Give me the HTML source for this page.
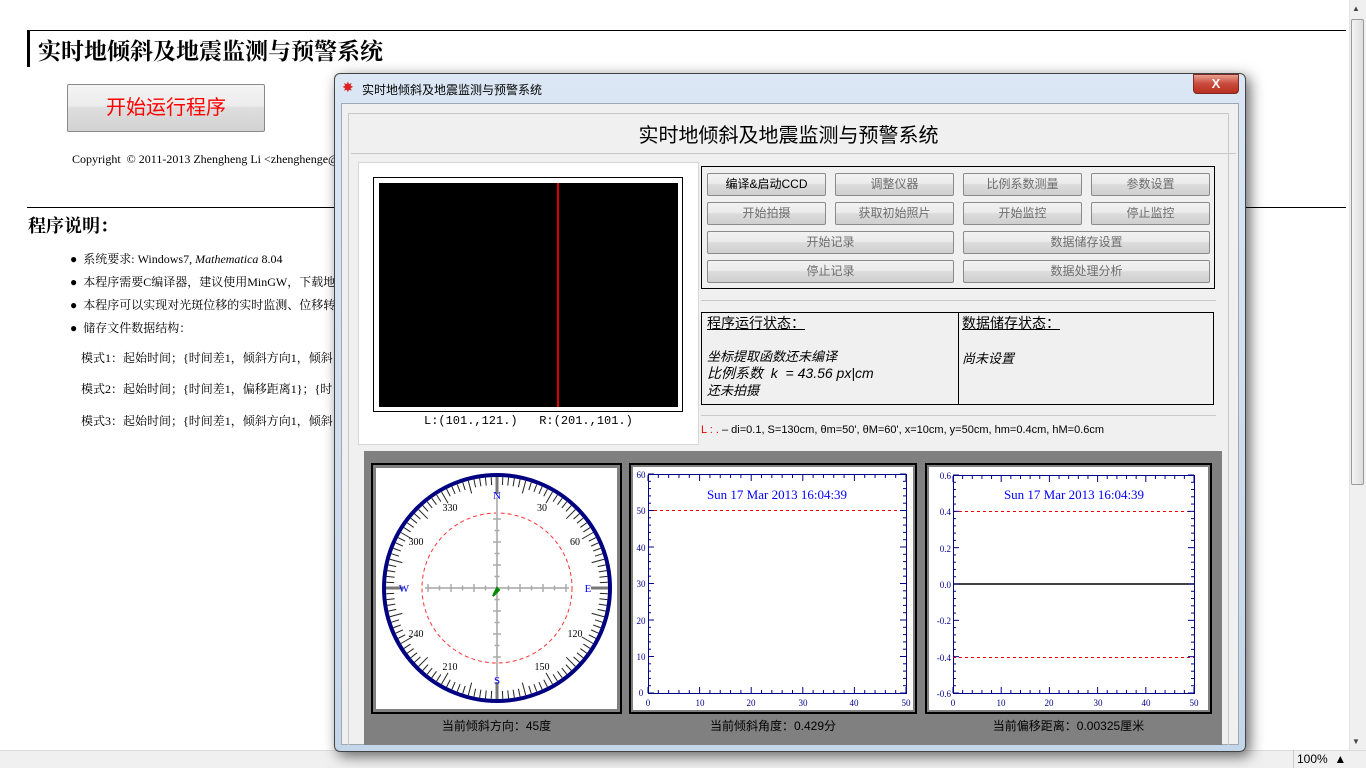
<!DOCTYPE html>
<html><head><meta charset="utf-8">
<style>
*{margin:0;padding:0;box-sizing:border-box}
body{width:1366px;height:768px;overflow:hidden;background:#fff;position:relative;font-family:"Liberation Serif","Noto Serif CJK SC","Noto Sans CJK SC",serif;color:#000}
.a{position:absolute}
.cj{font-family:"Liberation Sans","Noto Sans CJK SC",sans-serif}
.btn{position:absolute;height:23px;border:1px solid #8a8a8a;border-radius:2px;background:linear-gradient(#f2f2f2 0,#ebebeb 45%,#dcdcdc 50%,#cfcfcf 100%);font:12px "Liberation Sans","Noto Sans CJK SC",sans-serif;color:#6d6d6d;text-align:center;line-height:21px}
.ln{position:absolute;height:1px;background:#c8c8c8}
</style></head><body>
<div class="a" style="left:27px;top:30px;width:1319px;height:1px;background:#000"></div>
<div class="a" style="left:27px;top:30px;width:3px;height:37px;background:#000"></div>
<div class="a" style="left:38px;top:36px;font-size:23px;font-weight:bold;line-height:32px">实时地倾斜及地震监测与预警系统</div>
<div class="a" style="left:67px;top:84px;width:198px;height:48px;border:1px solid #8a8a8a;border-radius:2px;background:linear-gradient(#f4f4f4 0,#ececec 45%,#dedede 50%,#d2d2d2 100%);color:#f00;font:20px 'Liberation Sans','Noto Sans CJK SC',sans-serif;text-align:center;line-height:46px">开始运行程序</div>
<div class="a" style="left:72px;top:152px;font-size:12px">Copyright &nbsp;© 2011-2013 Zhengheng Li &lt;zhenghenge@</div>
<div class="a" style="left:27px;top:207px;width:1319px;height:1px;background:#000"></div>
<div class="a" style="left:28px;top:212px;font-size:18px;font-weight:bold">程序说明：</div>
<div class="a" style="left:70px;top:248px;font-size:12px;line-height:23px">
<div>●&nbsp; 系统要求: Windows7, <i>Mathematica</i> 8.04</div>
<div>●&nbsp; 本程序需要C编译器，建议使用MinGW，下载地</div>
<div>●&nbsp; 本程序可以实现对光斑位移的实时监测、位移转</div>
<div>●&nbsp; 储存文件数据结构：</div></div>
<div class="a" style="left:81px;top:349px;font-size:12px">模式1：起始时间；{时间差1，倾斜方向1，倾斜</div>
<div class="a" style="left:81px;top:380px;font-size:12px">模式2：起始时间；{时间差1，偏移距离1}；{时</div>
<div class="a" style="left:81px;top:412px;font-size:12px">模式3：起始时间；{时间差1，倾斜方向1，倾斜</div>
<div class="a" style="left:1349px;top:0;width:17px;height:750px;background:#f0f0f0;border-left:1px solid #e3e3e3"></div>
<div class="a" style="left:1351px;top:19px;width:13px;height:466px;border:1px solid #9a9a9a;border-radius:2px;background:linear-gradient(90deg,#f4f4f4,#dcdcdc)"></div>
<div class="a" style="left:1352px;top:4px;font-size:8px;color:#444">▲</div>
<div class="a" style="left:1352px;top:737px;font-size:8px;color:#444">▼</div>
<div class="a" style="left:0;top:750px;width:1366px;height:18px;background:#f0f0f0;border-top:1px solid #dcdcdc"></div>
<div class="a" style="left:1293px;top:750px;width:1px;height:18px;background:#ccc"></div>
<div class="a cj" style="left:1297px;top:752px;font-size:12px">100% &nbsp;▲</div>
<div class="a" style="left:334px;top:73px;width:912px;height:679px;border:1px solid #444;border-radius:6px;background:linear-gradient(#dbe7f4,#c4d6ea);box-shadow:4px 4px 14px rgba(0,0,0,.6)"></div>
<div class="a" style="left:342px;top:80px;color:#d22;font-size:14px">✸</div>
<div class="a cj" style="left:362px;top:81px;font-size:12px">实时地倾斜及地震监测与预警系统</div>
<div class="a" style="left:1193px;top:74px;width:46px;height:20px;border:1px solid #7a2a20;border-radius:0 0 4px 4px;background:linear-gradient(#e8a090,#c8483a 50%,#b83020);color:#fff;font:bold 13px 'Liberation Sans',sans-serif;text-align:center;line-height:18px">X</div>
<div class="a" style="left:341px;top:103px;width:898px;height:642px;background:#f0f0f0;border:1px solid #a0a8b4"></div>
<div class="a" style="left:348px;top:113px;width:881px;height:632px;border:1px solid #c8c8c8;border-bottom:none"></div>
<div class="a cj" style="left:348px;top:119px;width:881px;text-align:center;font-size:20px">实时地倾斜及地震监测与预警系统</div>
<div class="ln" style="left:351px;top:153px;width:885px"></div>
<div class="a" style="left:358px;top:162px;width:341px;height:283px;background:#fff;border:1px solid #d8d8d8"></div>
<div class="a" style="left:373px;top:177px;width:310px;height:235px;border:1px solid #000"></div>
<div class="a" style="left:379px;top:183px;width:299px;height:224px;background:#000"></div>
<div class="a" style="left:557px;top:183px;width:2px;height:224px;background:#d00"></div>
<div class="a" style="left:424px;top:414px;font:12px 'Liberation Mono','Noto Sans CJK SC',monospace">L:(101.,121.)&nbsp;&nbsp;&nbsp;R:(201.,101.)</div>
<div class="a" style="left:701px;top:166px;width:514px;height:123px;border:1px solid #000"></div>
<div class="btn" style="left:707px;top:173px;width:119px;color:#000">编译&amp;启动CCD</div>
<div class="btn" style="left:835px;top:173px;width:119px">调整仪器</div>
<div class="btn" style="left:963px;top:173px;width:119px">比例系数测量</div>
<div class="btn" style="left:1091px;top:173px;width:119px">参数设置</div>
<div class="btn" style="left:707px;top:202px;width:119px">开始拍摄</div>
<div class="btn" style="left:835px;top:202px;width:119px">获取初始照片</div>
<div class="btn" style="left:963px;top:202px;width:119px">开始监控</div>
<div class="btn" style="left:1091px;top:202px;width:119px">停止监控</div>
<div class="btn" style="left:707px;top:231px;width:247px">开始记录</div>
<div class="btn" style="left:963px;top:231px;width:247px">数据储存设置</div>
<div class="btn" style="left:707px;top:260px;width:247px">停止记录</div>
<div class="btn" style="left:963px;top:260px;width:247px">数据处理分析</div>
<div class="ln" style="left:701px;top:300px;width:515px"></div>
<div class="a" style="left:701px;top:312px;width:513px;height:93px;border:1px solid #000"></div>
<div class="a" style="left:958px;top:312px;width:1px;height:93px;background:#000"></div>
<div class="a cj" style="left:707px;top:313px;font-size:14px;text-decoration:underline">程序运行状态：</div>
<div class="a cj" style="left:962px;top:313px;font-size:14px;text-decoration:underline">数据储存状态：</div>
<div class="a cj" style="left:707px;top:348px;font-size:13px;font-style:italic;line-height:17px">坐标提取函数还未编译<br><span style="font-size:14px">比例系数 &nbsp;k&nbsp; = 43.56 px|cm</span><br>还未拍摄</div>
<div class="a cj" style="left:962px;top:348px;font-size:13px;font-style:italic">尚未设置</div>
<div class="ln" style="left:701px;top:415px;width:515px"></div>
<div class="a cj" style="left:701px;top:424px;font-size:11px"><span style="color:#e00">L : .</span> – di=0.1, S=130cm, θm=50', θM=60', x=10cm, y=50cm, hm=0.4cm, hM=0.6cm</div>
<div class="a" style="left:364px;top:451px;width:858px;height:294px;background:#808080"></div>
<div class="a" style="left:371px;top:463px;width:251px;height:251px;border:2px solid #000;background:#fff;box-shadow:inset 0 0 0 3px #808080"></div>
<div class="a" style="left:629px;top:463px;width:288px;height:251px;border:2px solid #000;background:#fff;box-shadow:inset 0 0 0 2px #808080"></div>
<div class="a" style="left:925px;top:463px;width:287px;height:251px;border:2px solid #000;background:#fff;box-shadow:inset 0 0 0 2px #808080"></div>
<svg class="a" style="left:0;top:0" width="1366" height="768">
<g font-family="Liberation Serif,serif" font-size="10">
<circle cx="497" cy="588" r="75" fill="none" stroke="#f33" stroke-dasharray="4,3"/>
<line x1="425" y1="588" x2="569" y2="588" stroke="#bbb" stroke-width="2"/>
<line x1="497" y1="497" x2="497" y2="680" stroke="#bbb" stroke-width="2"/>
<g id="tk"></g>
<circle cx="497" cy="588" r="113" fill="none" stroke="#000080" stroke-width="4"/>
<g fill="#00f" text-anchor="middle" font-size="11"><text x="497" y="499">N</text><text x="497" y="684">S</text><text x="404" y="592">W</text><text x="588" y="592">E</text></g>
<g fill="#000" text-anchor="middle" font-size="10"><text x="450" y="511">330</text><text x="542" y="511">30</text><text x="416" y="545">300</text><text x="575" y="545">60</text><text x="416" y="637">240</text><text x="575" y="637">120</text><text x="450" y="670">210</text><text x="542" y="670">150</text></g>
<path d="M493 596 L497 588 L499 590 Z" fill="#080" stroke="#080" stroke-width="2"/>
<rect x="648.5" y="474.5" width="258" height="219" fill="none" stroke="#00008b"/>
<line x1="648" y1="510.5" x2="906" y2="510.5" stroke="#e00" stroke-dasharray="3,3"/>
<text x="777" y="499" text-anchor="middle" fill="#00f" font-size="13">Sun 17 Mar 2013 16:04:39</text>
<g fill="#00008b" font-size="9" text-anchor="middle">
<text x="641" y="478">60</text><text x="641" y="514">50</text><text x="641" y="551">40</text><text x="641" y="587">30</text><text x="641" y="624">20</text><text x="641" y="660">10</text><text x="641" y="696">0</text>
<text x="648" y="706">0</text><text x="700" y="706">10</text><text x="751" y="706">20</text><text x="803" y="706">30</text><text x="854" y="706">40</text><text x="906" y="706">50</text></g>
<rect x="953.5" y="475.5" width="241" height="218" fill="none" stroke="#00008b"/>
<line x1="953" y1="511.5" x2="1194" y2="511.5" stroke="#e00" stroke-dasharray="3,3"/>
<line x1="953" y1="657.5" x2="1194" y2="657.5" stroke="#e00" stroke-dasharray="3,3"/>
<line x1="953" y1="584" x2="1194" y2="584" stroke="#000" stroke-width="1.5"/>
<text x="1074" y="499" text-anchor="middle" fill="#00f" font-size="13">Sun 17 Mar 2013 16:04:39</text>
<g fill="#00008b" font-size="9" text-anchor="end">
<text x="951" y="479">0.6</text><text x="951" y="515">0.4</text><text x="951" y="552">0.2</text><text x="951" y="588">0.0</text><text x="951" y="624">-0.2</text><text x="951" y="661">-0.4</text><text x="951" y="697">-0.6</text></g>
<g fill="#00008b" font-size="9" text-anchor="middle"><text x="953" y="706">0</text><text x="1001" y="706">10</text><text x="1049" y="706">20</text><text x="1098" y="706">30</text><text x="1146" y="706">40</text><text x="1194" y="706">50</text></g>
<g id="ax" stroke="#00008b"></g>
</g></svg>
<div class="a cj" style="left:371px;top:717px;width:251px;text-align:center;font-size:12px">当前倾斜方向：45度</div>
<div class="a cj" style="left:629px;top:717px;width:288px;text-align:center;font-size:12px">当前倾斜角度：0.429分</div>
<div class="a cj" style="left:925px;top:717px;width:287px;text-align:center;font-size:12px">当前偏移距离：0.00325厘米</div>
<script>
var ns="http://www.w3.org/2000/svg",tk=document.getElementById("tk"),ax=document.getElementById("ax");
function L(g,x1,y1,x2,y2,c,w){var l=document.createElementNS(ns,"line");l.setAttribute("x1",x1);l.setAttribute("y1",y1);l.setAttribute("x2",x2);l.setAttribute("y2",y2);l.setAttribute("stroke",c);l.setAttribute("stroke-width",w||1);g.appendChild(l);}
for(var d=0;d<360;d+=3){var a=d*Math.PI/180,s=Math.sin(a),c=Math.cos(a),r2=(d%90==0)?94:(d%15==0?98:103);L(tk,497+111*s,588-111*c,497+r2*s,588-r2*c,d%90==0?"#777":"#222",d%90==0?3:1);}
for(var i=-6;i<=6;i++){if(!i)continue;var w=(i%2==0)?8:5;L(tk,497+i*11.5,588-w/2,497+i*11.5,588+w/2,"#aaa",1.5);L(tk,497-w/2,588+i*11.5,497+w/2,588+i*11.5,"#aaa",1.5);}
for(var i=0;i<=50;i+=2){var x=648+i*258/50;L(ax,x,693,x,i%10?690:687);L(ax,x,475,x,i%10?478:481);var x3=953+i*241/50;L(ax,x3,693,x3,i%10?690:687);L(ax,x3,476,x3,i%10?479:482);}
for(var v=0;v<=60;v+=2){var y=693-v*219/60;L(ax,648,y,v%10?651:654,y);L(ax,906,y,v%10?903:900,y);var y3=693-v*218/60;L(ax,953,y3,v%10?956:959,y3);L(ax,1194,y3,v%10?1191:1188,y3);}
</script>
</body></html>
